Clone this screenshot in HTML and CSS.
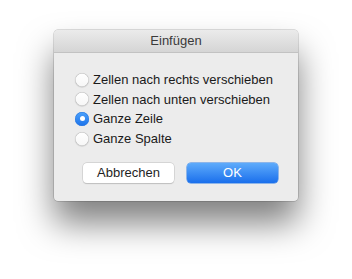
FILE: index.html
```html
<!DOCTYPE html>
<html>
<head>
<meta charset="utf-8">
<link rel="stylesheet" href="styles.css">
</head>
<body>
<div class="stage">
  <div class="dialog">
    <div class="titlebar">Einfügen</div>
    <div class="content">
      <div class="options">
        <label class="opt"><span class="radio"></span><span class="label">Zellen nach rechts verschieben</span></label>
        <label class="opt"><span class="radio"></span><span class="label">Zellen nach unten verschieben</span></label>
        <label class="opt"><span class="radio checked"></span><span class="label">Ganze Zeile</span></label>
        <label class="opt"><span class="radio"></span><span class="label">Ganze Spalte</span></label>
      </div>
      <div class="buttons">
        <button class="btn cancel">Abbrechen</button>
        <button class="btn ok">OK</button>
      </div>
    </div>
  </div>
</div>
</body>
</html>
```
FILE: styles.css
```css
html, body {
  margin: 0;
  padding: 0;
  background: #ffffff;
}
body {
  width: 352px;
  height: 279px;
  overflow: hidden;
  font-family: "Liberation Sans", Arial, sans-serif;
  font-size: 13px;
  color: #1e1e1e;
}
.stage {
  padding: 30px 0 0 54px;
}
.dialog {
  width: 244px;
  height: 171px;
  background: #ececec;
  border-radius: 4px;
  box-shadow: 0 0 0 0.5px rgba(0,0,0,0.25), 0 22px 34px rgba(0,0,0,0.5);
  overflow: hidden;
  display: flex;
  flex-direction: column;
}
.titlebar {
  height: 22px;
  line-height: 22px;
  text-align: center;
  background: linear-gradient(#ebebeb, #d5d5d5);
  border-bottom: 1px solid #c2c2c2;
  color: #3a3a3a;
  font-size: 13px;
}
.content {
  padding: 17px 0 0 21px;
  display: flex;
  flex-direction: column;
}
.options {
  display: flex;
  flex-direction: column;
}
.opt {
  display: flex;
  align-items: center;
  height: 19.6px;
}
.radio {
  width: 14px;
  height: 14px;
  border-radius: 50%;
  background: linear-gradient(#ffffff, #f6f6f6);
  box-shadow: inset 0 0 0 0.5px #b8b8b8, 0 0.5px 1px rgba(0,0,0,0.18);
  margin-right: 4px;
  position: relative;
  flex: none;
}
.radio.checked {
  background: linear-gradient(#4ca2fb, #1b72ea);
  box-shadow: inset 0 0 0 0.5px #2a78e0;
}
.radio.checked::after {
  content: "";
  position: absolute;
  left: 4.5px;
  top: 4.5px;
  width: 5px;
  height: 5px;
  border-radius: 50%;
  background: #ffffff;
}
.label {
  white-space: nowrap;
  color: #1a1a1a;
}
.buttons {
  display: flex;
  gap: 13px;
  margin-top: 15px;
  padding-left: 8px;
}
.btn {
  width: 91px;
  height: 20px;
  border: none;
  border-radius: 4px;
  font-family: "Liberation Sans", Arial, sans-serif;
  font-size: 13px;
  padding: 0;
  line-height: 20px;
}
.cancel {
  background: #ffffff;
  color: #1e1e1e;
  box-shadow: 0 0 0 0.5px #c4c4c4, 0 0.5px 1px rgba(0,0,0,0.2);
}
.ok {
  background: linear-gradient(#5eabfb, #1a6fec);
  color: #ffffff;
  box-shadow: 0 0 0 0.5px #2f7fe6;
}
```
